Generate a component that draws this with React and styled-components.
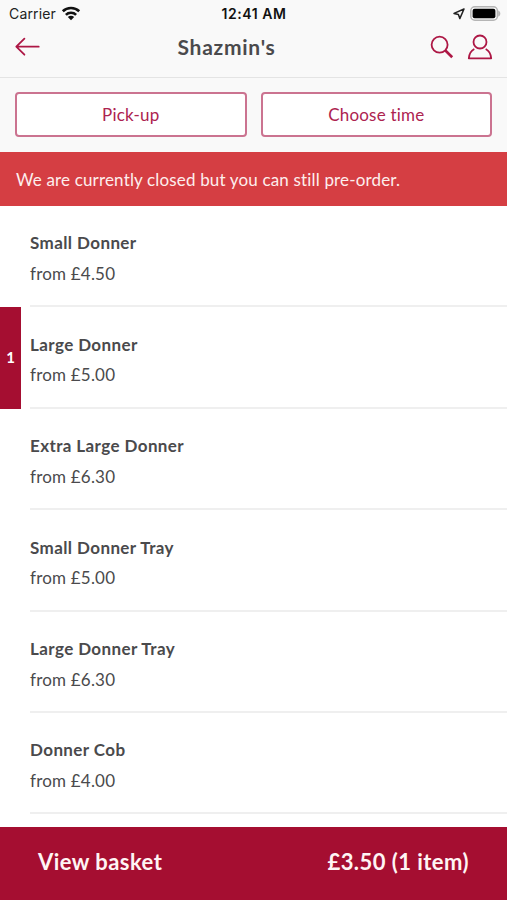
import React from 'react';
import styled, { createGlobalStyle } from 'styled-components';

const GlobalStyle = createGlobalStyle`
* {
  box-sizing: border-box;
}

body {
  margin: 0;
  overflow: hidden;
  background-color: white;
}
`;

const Screen = styled.div`
display: flex;
flex-direction: column;
width: 100%;
height: 100vh;
overflow: hidden;
color: #4a4a4c;
font-family: Lato, 'Liberation Sans', sans-serif;
`;

const StatusBar = styled.div`
display: grid;
grid-template-columns: 1fr auto 1fr;
align-items: center;
flex: none;
height: 27px;
padding: 0 6px 0 9px;
background-color: #f9f9f9;
color: #222;
font-family: Inter, 'Liberation Sans', sans-serif;
font-size: 14px;
line-height: 27px;
letter-spacing: 0.15px;
`;

const StatusGroup = styled.div`
display: flex;
align-items: center;
justify-content: ${props => props.$end ? 'flex-end' : 'flex-start'};
gap: 5px;
`;

const Clock = styled.div`
margin-left: -2px;
color: #111;
font-weight: 600;
letter-spacing: 0.55px;
`;

const Header = styled.header`
display: grid;
grid-template-columns: 1fr auto 1fr;
align-items: center;
flex: none;
height: 51px;
padding: 0 14px 10px 15px;
border-bottom: 1px solid #e4e4e4;
background-color: #f9f9f9;

svg {
  display: block;
}
`;

const Title = styled.h1`
margin: 0;
padding-right: 55px;
font-size: 21px;
font-weight: 700;
line-height: 28px;
letter-spacing: 0.75px;
`;

const Actions = styled.div`
display: flex;
justify-content: flex-end;
gap: 13px;
`;

const Options = styled.div`
display: flex;
flex: none;
gap: 14px;
height: 74px;
padding: 14px 15px 15px;
background-color: #f9f9f9;
`;

const OptionButton = styled.button`
flex: 1;
padding: 0;
border: 2px solid #cb7390;
border-radius: 4px;
background-color: white;
color: #ad2350;
font-family: inherit;
font-size: 17px;
letter-spacing: 0.2px;
`;

const Banner = styled.div`
flex: none;
height: 54px;
padding-left: 16px;
background-color: #d53e43;
color: #fdeeed;
font-size: 17px;
line-height: 55px;
letter-spacing: 0.16px;
white-space: nowrap;
`;

const Menu = styled.ul`
flex: 1;
min-height: 0;
margin: 0;
padding: 0;
overflow: hidden;
list-style: none;
`;

const MenuItem = styled.li`
display: flex;
height: 101.4px;
`;

const Quantity = styled.div`
flex: none;
width: 21px;
margin-right: 9px;
background-color: ${props => props.$active ? '#a50e31' : 'transparent'};
color: white;
font-size: 15px;
font-weight: 700;
line-height: 101px;
text-align: center;
`;

const Details = styled.div`
flex: 1;
padding-top: 22.4px;
border-bottom: 2px solid #efefef;
`;

const Name = styled.div`
font-size: 17px;
font-weight: 700;
line-height: 30px;
letter-spacing: 0.4px;
`;

const Price = styled.div`
padding-top: 0.6px;
font-size: 17px;
line-height: 30px;
letter-spacing: 0.2px;
`;

const Basket = styled.footer`
display: flex;
justify-content: space-between;
flex: none;
height: 73px;
padding: 0 38px;
background-color: #a50e31;
color: #fff4f4;
font-size: 22px;
font-weight: 700;
line-height: 70px;
letter-spacing: 0.45px;
`;

const items = [
  { name: 'Small Donner', price: '£4.50' },
  { name: 'Large Donner', price: '£5.00', quantity: 1 },
  { name: 'Extra Large Donner', price: '£6.30' },
  { name: 'Small Donner Tray', price: '£5.00' },
  { name: 'Large Donner Tray', price: '£6.30' },
  { name: 'Donner Cob', price: '£4.00' },
];

// Icons
const WifiIcon = () => (
  <svg width = '20' height = '15' viewBox = '0 0 20 15' fill = 'none' stroke = '#111' strokeWidth = '2.6'>
    <path d = 'M1.8 5.2C6.2.9 13.8.9 18.2 5.2' />
    <path d = 'M4.9 8.8C7.6 6.1 12.4 6.1 15.1 8.8' />
    <path d = 'M10 14.2L6.8 11.1C8.6 9.4 11.4 9.4 13.2 11.1Z' fill = '#111' stroke = 'none' />
  </svg>
);

const LocationIcon = () => (
  <svg width = '12' height = '12' viewBox = '0 0 12 12' fill = 'none' stroke = '#222' strokeWidth = '1.5' strokeLinejoin = 'round'>
    <path d = 'M11 1L1 5.4L5.4 6.4L6.8 10.6Z' />
  </svg>
);

const BatteryIcon = () => (
  <svg width = '31' height = '15' viewBox = '0 0 31 15'>
    <rect x = '.8' y = '.8' width = '26.6' height = '13.4' rx = '4' fill = '#f9f9f9' stroke = '#b5b5b5' strokeWidth = '1.5' />
    <rect x = '2.6' y = '2.8' width = '22.8' height = '9.4' rx = '2' fill = '#000' />
    <path d = 'M28.2 4.4C31 5.4 31 9.6 28.2 10.6Z' fill = '#b5b5b5' />
  </svg>
);

const BackIcon = () => (
  <svg width = '25' height = '20' viewBox = '0 0 25 20' fill = 'none' stroke = '#ad1745' strokeWidth = '1.8' strokeLinecap = 'round' strokeLinejoin = 'round'>
    <path d = 'M9.4 1.7L1.3 9.7L9.4 17.7M1.5 9.7H23.7' />
  </svg>
);

const SearchIcon = () => (
  <svg width = '24' height = '26' viewBox = '0 0 24 26' fill = 'none' stroke = '#ad1745'>
    <circle cx = '9.6' cy = '10.7' r = '8' strokeWidth = '1.8' />
    <path d = 'M15.4 16.5L22.2 23.2' strokeWidth = '2.6' />
  </svg>
);

const UserIcon = () => (
  <svg width = '26' height = '26' viewBox = '0 0 26 26' fill = 'none' stroke = '#ad1745' strokeWidth = '1.8' strokeLinejoin = 'round'>
    <circle cx = '13' cy = '8' r = '6.5' />
    <path d = 'M7.3 15C4 16.7 2.2 19.8 1.8 24.3H24.2C23.8 19.8 22 16.7 18.7 15' />
  </svg>
);

function App() {
  return (
    <Screen>
      <GlobalStyle />
      <StatusBar>
        <StatusGroup>
          Carrier
          <WifiIcon />
        </StatusGroup>
        <Clock>12:41 AM</Clock>
        <StatusGroup $end>
          <LocationIcon />
          <BatteryIcon />
        </StatusGroup>
      </StatusBar>
      <Header>
        <BackIcon />
        <Title>Shazmin's</Title>
        <Actions>
          <SearchIcon />
          <UserIcon />
        </Actions>
      </Header>
      <Options>
        <OptionButton>Pick-up</OptionButton>
        <OptionButton>Choose time</OptionButton>
      </Options>
      <Banner>We are currently closed but you can still pre-order.</Banner>
      <Menu>
        {items.map(item => (
          <MenuItem key = {item.name}>
            <Quantity $active = {Boolean(item.quantity)}>{item.quantity}</Quantity>
            <Details>
              <Name>{item.name}</Name>
              <Price>from {item.price}</Price>
            </Details>
          </MenuItem>
        ))}
      </Menu>
      <Basket>
        <span>View basket</span>
        <span>£3.50 (1 item)</span>
      </Basket>
    </Screen>
  );
}

export default App;
